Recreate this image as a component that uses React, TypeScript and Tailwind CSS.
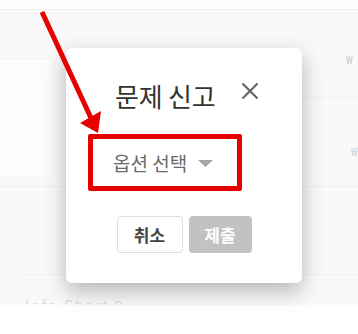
const font = { fontFamily: '"Noto Sans CJK KR", "Noto Sans", sans-serif' }

export default function App() {
  return (
    <div className="relative w-[358px] h-[334px] overflow-hidden bg-white" style={font}>
      {/* Faded page behind the dialog */}
      <div className="flex flex-col h-[305px] bg-[#f9f9f9]">
        <div className="h-[10px] bg-[#fdfdfd] border-b border-[#f0f0f0]" />
        <div className="flex h-[177px] border-b border-[#efefef]">
          <div className="w-[53px] pt-[48px]">
            <div className="h-[120px] bg-[#fcfcfc] border border-l-0 border-[#f3f3f3]" />
          </div>
          <div className="flex-1" />
          <div className="w-[56px] flex flex-col">
            <div className="h-[88px] border-b border-[#f0f0f0] pt-[40px] pl-[44px] text-[12px] text-[#cfcfcf]">₩</div>
            <div className="pt-[44px] pl-[49px] text-[12px] text-[#d2d2d2]">₩</div>
          </div>
        </div>
        <div className="h-[88px] ml-[25px] border-b border-[#f0f0f0]" />
        <div className="h-[29px] overflow-hidden pl-[25px] pt-[20px]">
          <p className="text-[14px] leading-[20px] text-[#dddddd] tracking-[2px]">Info Chart 9</p>
        </div>
      </div>

      {/* Dialog */}
      <div className="absolute left-[66px] top-[48px] w-[236px] bg-white rounded-[6px] shadow-[0_8px_22px_rgba(0,0,0,0.28)] px-[22px] pt-[30px] pb-[30px]">
        <div className="flex items-center pl-[27px]">
          <h2 className="text-[26px] leading-[36px] text-[#333333] tracking-[-0.2px]">문제 신고</h2>
          <svg className="ml-[25px] -mt-[10px]" width="18" height="18" viewBox="0 0 18 18">
            <path d="M1.5 1.5 L16.5 16.5 M16.5 1.5 L1.5 16.5" stroke="#666666" strokeWidth="2.2" />
          </svg>
        </div>
        <div className="mt-[20px] w-[154px] border-[5px] border-[#e60000] rounded-[2px] pl-[20px] pr-[6px] py-[10px] flex items-center">
          <span className="text-[19px] leading-[27px] text-[#6a6a6a] whitespace-nowrap">옵션 선택</span>
          <svg className="ml-[11px] mt-[2px] shrink-0" width="15" height="7" viewBox="0 0 15 7">
            <polygon points="0,0 15,0 7.5,7" fill="#a6a6a6" />
          </svg>
        </div>
        <div className="mt-[25px] flex justify-center gap-[6px]">
          <button className="w-[66px] h-[37px] rounded-[4px] border border-[#dddddd] bg-white text-[17px] font-bold text-[#444444]">
            취소
          </button>
          <button className="w-[63px] h-[37px] rounded-[4px] bg-[#c2c2c2] text-[17px] font-bold text-white">
            제출
          </button>
        </div>
      </div>

      {/* Red annotation arrow */}
      <svg className="absolute left-0 top-0" width="358" height="334" viewBox="0 0 358 334">
        <line x1="42" y1="12" x2="91" y2="118" stroke="#e60000" strokeWidth="5" />
        <polygon points="80,123 101,111 98,133" fill="#e60000" />
      </svg>
    </div>
  )
}
